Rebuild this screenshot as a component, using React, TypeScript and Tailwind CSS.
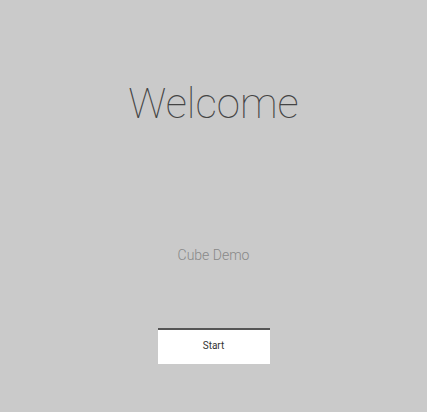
export default function App() {
  return (
    <div className="h-[412px] w-full bg-[#cacaca] flex flex-col items-center font-['Roboto',sans-serif]">
      <h1 className="mt-[78px] text-[42px] leading-[52px] font-thin text-[#444]">Welcome</h1>
      <p className="mt-[115px] text-[14px] leading-[20px] font-light text-[#888]">Cube Demo</p>
      <button className="mt-[63px] w-[112px] h-[36px] bg-white border-t-2 border-[#555] pb-[3px] text-[10px] text-[#333]">
        Start
      </button>
    </div>
  )
}
